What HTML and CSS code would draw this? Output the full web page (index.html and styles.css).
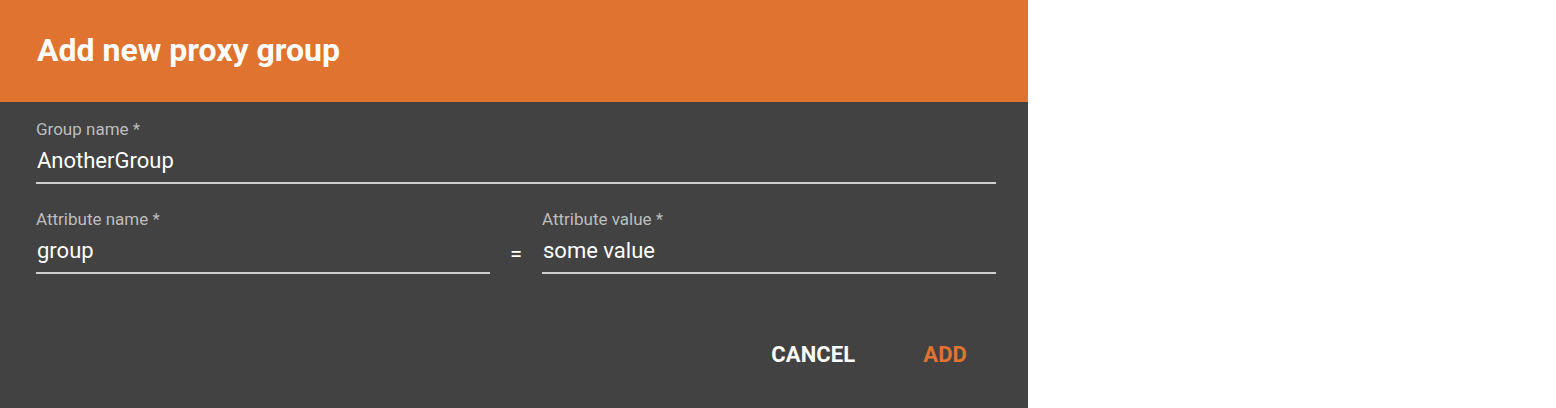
FILE: index.html
```html
<!DOCTYPE html>
<html lang="en">
<head>
<meta charset="utf-8">
<title>Add new proxy group</title>
<link rel="stylesheet" href="styles.css">
</head>
<body>
<div class="dialog">
  <div class="dialog-header">
    <h1 class="dialog-title">Add new proxy group</h1>
  </div>
  <div class="dialog-content">
    <div class="field">
      <label class="field-label">Group name *</label>
      <div class="field-input">AnotherGroup</div>
    </div>
    <div class="attr-row">
      <div class="field field-half">
        <label class="field-label">Attribute name *</label>
        <div class="field-input">group</div>
      </div>
      <div class="equals">=</div>
      <div class="field field-half">
        <label class="field-label">Attribute value *</label>
        <div class="field-input">some value</div>
      </div>
    </div>
  </div>
  <div class="dialog-actions">
    <button class="btn btn-cancel">CANCEL</button>
    <button class="btn btn-add">ADD</button>
  </div>
</div>
</body>
</html>
```

FILE: styles.css
```css
html, body {
  margin: 0;
  padding: 0;
  background: #ffffff;
  font-family: Roboto, "Liberation Sans", Arial, sans-serif;
}

.dialog {
  width: 1028px;
  height: 408px;
  background: #424242;
  display: flex;
  flex-direction: column;
  overflow: hidden;
}

.dialog-header {
  height: 102px;
  background: #e07330;
  box-sizing: border-box;
  padding: 0 0 2px 37px;
  display: flex;
  align-items: center;
}

.dialog-title {
  margin: 0;
  color: #ffffff;
  font-size: 32px;
  font-weight: 700;
  line-height: 40px;
}

.dialog-content {
  padding: 17px 32px 0 36px;
  display: flex;
  flex-direction: column;
  gap: 25px;
}

.field {
  display: flex;
  flex-direction: column;
  gap: 8px;
  border-bottom: 2px solid #cfcfcf;
  padding-bottom: 7px;
}

.field-label {
  color: #bdbdbd;
  font-size: 17px;
  line-height: 20px;
}

.field-input {
  color: #ffffff;
  font-size: 22px;
  line-height: 28px;
  padding-left: 1px;
}

.attr-row {
  display: flex;
  align-items: stretch;
}

.field-half {
  flex: 1 1 0;
}

.equals {
  width: 52px;
  flex: none;
  display: flex;
  align-items: flex-end;
  justify-content: center;
  color: #ffffff;
  font-size: 22px;
  line-height: 22px;
  padding-bottom: 9px;
}

.dialog-actions {
  margin-top: auto;
  display: flex;
  justify-content: flex-end;
  gap: 68px;
  padding: 0 61px 41px 0;
}

.btn {
  background: none;
  border: none;
  padding: 0;
  font-family: inherit;
  font-size: 22px;
  font-weight: 700;
  line-height: 24px;
  letter-spacing: 0.1px;
  cursor: pointer;
}

.btn-cancel {
  color: #ffffff;
}

.btn-add {
  color: #e07330;
}
```
